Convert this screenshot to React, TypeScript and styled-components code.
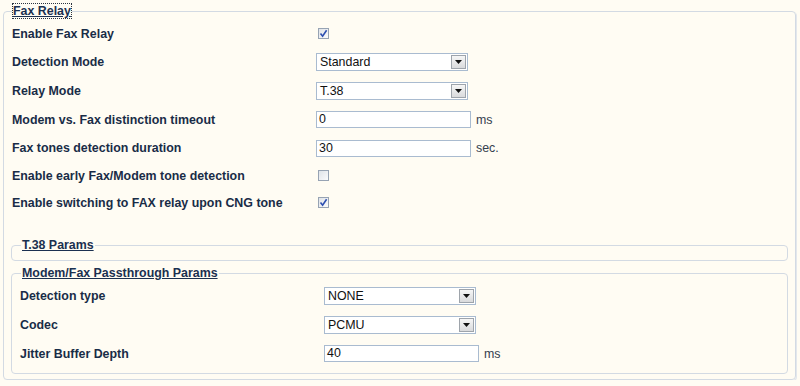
import React from "react";
import styled, {createGlobalStyle} from "styled-components";

const GlobalStyle = createGlobalStyle`
  html, body {
    margin: 0;
    padding: 0;
    background: #fffcf3;
  }
  body {
    font-family: "Liberation Sans", Arial, sans-serif;
    font-size: 12px;
    color: #1b2f4a;
  }
`

type Field = {
    label: string
    kind: "check" | "select" | "text"
    value?: string
    checked?: boolean
    unit?: string
    height: number
}

const faxRelay: Field[] = [
    {label: "Enable Fax Relay", kind: "check", checked: true, height: 29},
    {label: "Detection Mode", kind: "select", value: "Standard", height: 28},
    {label: "Relay Mode", kind: "select", value: "T.38", height: 29},
    {label: "Modem vs. Fax distinction timeout", kind: "text", value: "0", unit: "ms", height: 29},
    {label: "Fax tones detection duration", kind: "text", value: "30", unit: "sec.", height: 28},
    {label: "Enable early Fax/Modem tone detection", kind: "check", checked: false, height: 27},
    {label: "Enable switching to FAX relay upon CNG tone", kind: "check", checked: true, height: 27},
]

const passthrough: Field[] = [
    {label: "Detection type", kind: "select", value: "NONE", height: 29},
    {label: "Codec", kind: "select", value: "PCMU", height: 29},
    {label: "Jitter Buffer Depth", kind: "text", value: "40", unit: "ms", height: 29},
]

const FieldRow = ({field}: { field: Field }) => (
    <Row $height={field.height}>
        <Label>{field.label}</Label>
        {field.kind === "check" && (
            <CheckBox>
                {field.checked && (
                    <svg width="9" height="9" viewBox="0 0 9 9">
                        <path d="M1.5 4.5 L3.6 7.2 L7.6 1.2" fill="none" stroke="#2d4fb0" strokeWidth="1.6"/>
                    </svg>
                )}
            </CheckBox>
        )}
        {field.kind === "select" && (
            <SelectBox>
                <span>{field.value}</span>
                <ArrowButton>
                    <svg width="7" height="4" viewBox="0 0 7 4">
                        <path d="M0 0 H7 L3.5 4 Z" fill="#111"/>
                    </svg>
                </ArrowButton>
            </SelectBox>
        )}
        {field.kind === "text" && (
            <>
                <TextBox>{field.value}</TextBox>
                <Unit>{field.unit}</Unit>
            </>
        )}
    </Row>
)

export default function App() {
    return (
        <Page>
            <GlobalStyle/>
            <Outer>
                <OuterLegend>Fax Relay</OuterLegend>
                {faxRelay.map(f => <FieldRow key={f.label} field={f}/>)}
                <InnerSet $top={21} $bottom={7}>
                    <InnerLegend>T.38 Params</InnerLegend>
                </InnerSet>
                <InnerSet $top={4} $bottom={5}>
                    <InnerLegend>Modem/Fax Passthrough Params</InnerLegend>
                    {passthrough.map(f => <FieldRow key={f.label} field={f}/>)}
                </InnerSet>
            </Outer>
        </Page>
    )
}

const Page = styled.div`
  padding: 3px 3px 0 3px;
`

const Outer = styled.fieldset`
  margin: 0 1px 0 0;
  padding: 0 0 5px 0;
  border: 1px solid #d3dae3;
  border-radius: 4px;
  box-shadow: 1px 1px 0 #e3e7ec;
  min-width: 0;
`

const OuterLegend = styled.legend`
  margin-left: 8px;
  padding: 0 1px;
  line-height: 16px;
  font-weight: bold;
  font-size: 12.4px;
  color: #1b3050;
  text-decoration: underline;
  outline: 1px dotted #2a3340;
  outline-offset: -1px;
`

const InnerSet = styled.fieldset<{ $top: number, $bottom: number }>`
  margin: ${p => p.$top}px 7px 0 7px;
  padding: 0 0 ${p => p.$bottom}px 0;
  border: 1px solid #d3dae3;
  border-radius: 4px;
  min-width: 0;
`

const InnerLegend = styled.legend`
  margin-left: 9px;
  padding: 0 1px;
  line-height: 16px;
  font-weight: bold;
  font-size: 12.4px;
  color: #1b3050;
  text-decoration: underline;
`

const Row = styled.div<{ $height: number }>`
  display: flex;
  align-items: center;
  height: ${p => p.$height}px;
  padding-left: 8px;
`

const Label = styled.div`
  width: 304px;
  flex-shrink: 0;
  font-weight: bold;
  font-size: 12.4px;
  color: #192c47;
`

const CheckBox = styled.span`
  box-sizing: border-box;
  width: 11px;
  height: 11px;
  margin-left: 2px;
  display: flex;
  align-items: center;
  justify-content: center;
  border: 1px solid #97a3b3;
  background: linear-gradient(135deg, #dfe3e8, #fbfbfc);
`

const SelectBox = styled.div`
  box-sizing: border-box;
  width: 152px;
  height: 18px;
  display: flex;
  align-items: center;
  justify-content: space-between;
  padding: 0 1px 0 3px;
  border: 1px solid #a9bbd0;
  background: #fff;
  font-size: 12.4px;
  color: #111;
`

const ArrowButton = styled.span`
  box-sizing: border-box;
  width: 15px;
  height: 14px;
  display: flex;
  align-items: center;
  justify-content: center;
  border: 1px solid #9ea4ab;
  background: linear-gradient(#f6f6f6, #d9dadc);
`

const TextBox = styled.div`
  box-sizing: border-box;
  width: 155px;
  height: 17px;
  line-height: 15px;
  padding: 0 2px;
  border: 1px solid #a9bbd0;
  background: #fff;
  font-size: 12.4px;
  color: #111;
`

const Unit = styled.span`
  margin-left: 5px;
  font-size: 12.4px;
  color: #34404e;
`
